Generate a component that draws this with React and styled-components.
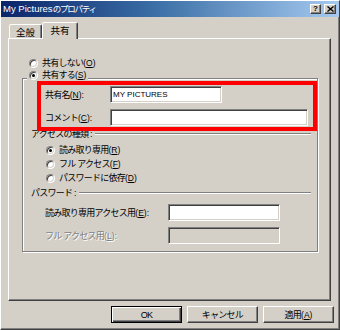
import React from 'react';
import styled, { createGlobalStyle, css } from 'styled-components';

const FACE = '#d4d0c8';
const FONT = `"Liberation Sans", "Noto Sans CJK JP", sans-serif`;

const Global = createGlobalStyle`
  html, body { margin: 0; padding: 0; background: ${FACE}; }
  #root { width: 340px; height: 330px; }
  * { box-sizing: border-box; }
`;

const Window = styled.div`
  width: 340px;
  height: 330px;
  background: ${FACE};
  border: 1px solid;
  border-color: #fff #404040 #404040 #fff;
  box-shadow: inset -1px -1px 0 #808080;
  display: flex;
  flex-direction: column;
  font-family: ${FONT};
  font-size: 9px;
  letter-spacing: -0.75px;
  color: #000;
  overflow: hidden;
`;

const KeyText = styled.span`
  letter-spacing: 0;
  font-size: 8.5px;
`;

const TitleBar = styled.div`
  height: 16px;
  flex: none;
  display: flex;
  align-items: center;
  padding: 0 3px 0 2px;
  background: linear-gradient(to right, #0a246a 0%, #3a6ea5 45%, #a6caf0 100%);
  color: #fff;
`;

const TitleText = styled.div`
  flex: 1;
  font-size: 9.5px;
  letter-spacing: 0;
  line-height: 16px;
  white-space: nowrap;
`;

const TitleKana = styled.span`
  font-size: 8.5px;
  letter-spacing: -1.2px;
`;

const CaptionButtons = styled.div`
  display: flex;
  gap: 3px;
`;

const CaptionButton = styled.div`
  width: ${p => p.$w}px;
  height: 10px;
  background: ${FACE};
  border: 1px solid;
  border-color: #fff #404040 #404040 #fff;
  box-shadow: inset -1px -1px 0 #808080;
  display: flex;
  align-items: center;
  justify-content: center;
  color: #000;
  font-family: "Liberation Sans", sans-serif;
  font-weight: bold;
  font-size: 8px;
  line-height: 8px;
  letter-spacing: 0;
`;

const Body = styled.div`
  flex: 1;
  display: flex;
  flex-direction: column;
  padding: 5px 5px 0 7px;
`;

const TabStrip = styled.div`
  height: 16px;
  display: flex;
  align-items: flex-end;
  padding-left: 1px;
`;

const Tab = styled.div`
  position: relative;
  width: ${p => (p.$active ? 36 : 33)}px;
  height: ${p => (p.$active ? 17 : 14)}px;
  margin-bottom: ${p => (p.$active ? -1 : 0)}px;
  z-index: ${p => (p.$active ? 1 : 0)};
  background: ${FACE};
  border: 1px solid;
  border-bottom: none;
  border-color: #fff #404040 transparent #fff;
  border-radius: 2px 2px 0 0;
  box-shadow: inset -1px 0 0 #808080;
  display: flex;
  align-items: center;
  justify-content: center;
  padding-bottom: ${p => (p.$active ? 2 : 0)}px;
  font-size: 9.5px;
  letter-spacing: 0;
`;

const Panel = styled.div`
  width: 323px;
  height: 263px;
  border: 1px solid;
  border-color: #fff #404040 #404040 #fff;
  box-shadow: inset -1px -1px 0 #808080;
  display: flex;
  flex-direction: column;
  padding: 18px 12px 0 13px;
`;

const OptionRow = styled.div`
  height: 12px;
  display: flex;
  align-items: center;
  gap: 4px;
  line-height: 12px;
  white-space: nowrap;
  margin-left: ${p => p.$indent || 0}px;
`;

const RadioMark = styled.span`
  flex: none;
  width: 9px;
  height: 9px;
  border-radius: 50%;
  border: 1px solid;
  border-color: #808080 #fff #fff #808080;
  box-shadow: inset 1px 1px 0 #404040, inset -1px -1px 0 ${FACE};
  background: #fff;
  display: flex;
  align-items: center;
  justify-content: center;
  &::after {
    content: '';
    width: 3px;
    height: 3px;
    border-radius: 50%;
    background: ${p => (p.$checked ? '#000' : 'transparent')};
  }
`;

const Group = styled.div`
  position: relative;
  margin-top: 9px;
  border: 1px solid #808080;
  box-shadow: inset 1px 1px 0 #fff, 1px 1px 0 #fff;
  padding-bottom: 7px;
  display: flex;
  flex-direction: column;
`;

const GroupCaption = styled.div`
  align-self: flex-start;
  margin: -10px 0 0 4px;
  padding: 0 2px;
  background: ${FACE};
`;

const Highlight = styled.div`
  position: absolute;
  top: 2px;
  left: 14px;
  width: 280px;
  height: 50px;
  border: 4px solid #ff0000;
  pointer-events: none;
  z-index: 2;
`;

const FieldRow = styled.div`
  height: 17px;
  display: flex;
  align-items: center;
  margin-top: ${p => p.$top}px;
  padding-left: 22px;
  white-space: nowrap;
`;

const FieldLabel = styled.div`
  width: ${p => p.$w}px;
  flex: none;
  line-height: 12px;
  ${p => p.$disabled && css`
    color: #808080;
    text-shadow: 1px 1px 0 #fff;
  `}
`;

const TextBox = styled.div`
  width: ${p => p.$w}px;
  height: 17px;
  flex: none;
  border: 1px solid;
  border-color: #808080 #fff #fff #808080;
  box-shadow: inset 1px 1px 0 #404040, inset -1px -1px 0 ${FACE};
  background: ${p => (p.$disabled ? FACE : '#fff')};
  padding-left: 2px;
  display: flex;
  align-items: center;
  font-family: "Liberation Sans", sans-serif;
  font-size: 8px;
  letter-spacing: 0;
`;

const SectionHeader = styled.div`
  height: 12px;
  display: flex;
  align-items: center;
  margin: ${p => p.$top}px 6px 0 8px;
  line-height: 12px;
  white-space: nowrap;
`;

const Etch = styled.div`
  flex: 1;
  height: 2px;
  margin-left: 3px;
  border-top: 1px solid #808080;
  border-bottom: 1px solid #fff;
`;

const RadioList = styled.div`
  display: flex;
  flex-direction: column;
  gap: 2px;
  margin: 4px 0 0 23px;
`;

const ButtonRow = styled.div`
  display: flex;
  justify-content: flex-end;
  gap: 5px;
  margin-top: 5px;
`;

const Button = styled.div`
  width: 71px;
  height: 17px;
  display: flex;
  align-items: center;
  justify-content: center;
  border: 1px solid;
  border-color: #fff #404040 #404040 #fff;
  box-shadow: inset -1px -1px 0 #808080, inset 1px 1px 0 ${FACE};
  line-height: 12px;
  ${p => p.$default && css`
    border-color: #000;
    box-shadow: inset 1px 1px 0 #fff, inset -1px -1px 0 #404040, inset -2px -2px 0 #808080;
  `}
`;

const Key = ({ k, colon }) => (
  <KeyText>
    (<u>{k}</u>){colon ? ':' : ''}
  </KeyText>
);

const Radio = ({ checked, children, indent }) => (
  <OptionRow $indent={indent}>
    <RadioMark $checked={checked} />
    <span>{children}</span>
  </OptionRow>
);

export default function App() {
  return (
    <>
      <Global />
      <Window>
        <TitleBar>
          <TitleText>
            My Pictures<TitleKana>のプロパティ</TitleKana>
          </TitleText>
          <CaptionButtons>
            <CaptionButton $w={11}>?</CaptionButton>
            <CaptionButton $w={12}>
              <svg width="7" height="6" viewBox="0 0 7 6">
                <path d="M0.5 0.5 L6.5 5.5 M6.5 0.5 L0.5 5.5" stroke="#000" strokeWidth="1.4" />
              </svg>
            </CaptionButton>
          </CaptionButtons>
        </TitleBar>
        <Body>
          <TabStrip>
            <Tab>全般</Tab>
            <Tab $active>共有</Tab>
          </TabStrip>
          <Panel>
            <Radio indent={7}>共有しない<Key k="O" /></Radio>
            <Group>
              <Highlight />
              <GroupCaption>
                <Radio checked>共有する<Key k="S" /></Radio>
              </GroupCaption>
              <FieldRow $top={5}>
                <FieldLabel $w={65}>共有名<Key k="N" colon /></FieldLabel>
                <TextBox $w={112}>MY PICTURES</TextBox>
              </FieldRow>
              <FieldRow $top={6}>
                <FieldLabel $w={65}>コメント<Key k="C" colon /></FieldLabel>
                <TextBox $w={198} />
              </FieldRow>
              <SectionHeader $top={2}>
                アクセスの種類 :
                <Etch />
              </SectionHeader>
              <RadioList>
                <Radio checked>読み取り専用<Key k="R" /></Radio>
                <Radio>フル アクセス<Key k="F" /></Radio>
                <Radio>パスワードに依存<Key k="D" /></Radio>
              </RadioList>
              <SectionHeader $top={3}>
                パスワード :
                <Etch />
              </SectionHeader>
              <FieldRow $top={5}>
                <FieldLabel $w={123}>読み取り専用アクセス用<Key k="E" colon /></FieldLabel>
                <TextBox $w={112} />
              </FieldRow>
              <FieldRow $top={6}>
                <FieldLabel $w={123} $disabled>フル アクセス用<Key k="L" colon /></FieldLabel>
                <TextBox $w={112} $disabled />
              </FieldRow>
            </Group>
          </Panel>
          <ButtonRow>
            <Button $default>OK</Button>
            <Button>キャンセル</Button>
            <Button>適用<Key k="A" /></Button>
          </ButtonRow>
        </Body>
      </Window>
    </>
  );
}
